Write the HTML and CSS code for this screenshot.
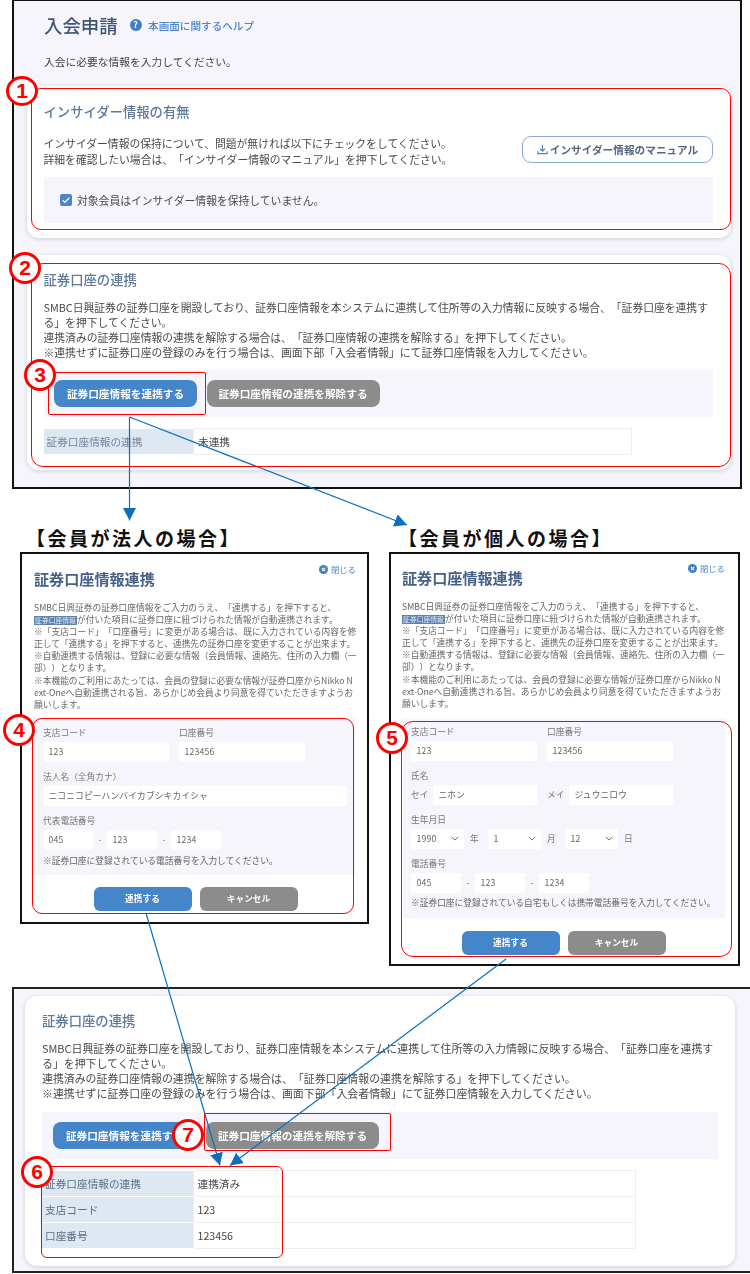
FILE: index.html
```html
<!DOCTYPE html>
<html lang="ja">
<head>
<meta charset="utf-8">
<title>入会申請</title>
<link rel="stylesheet" href="styles.css">
</head>
<body>
<div class="canvas">

  <section class="window win-top">
    <header class="page-head">
      <h1 class="page-title">入会申請</h1>
      <span class="help-icon">?</span>
      <a class="help-link">本画面に関するヘルプ</a>
    </header>
    <p class="page-sub">入会に必要な情報を入力してください。</p>

    <div class="card card-insider">
      <h2 class="card-title">インサイダー情報の有無</h2>
      <div class="insider-row">
        <p class="text">インサイダー情報の保持について、問題が無ければ以下にチェックをしてください。<br>詳細を確認したい場合は、「インサイダー情報のマニュアル」を押下してください。</p>
        <button class="btn-outline">
          <svg class="dl-icon" viewBox="0 0 12 12"><path d="M6 1v6.5M3.4 5.2 6 7.8l2.6-2.6M1 8v2.6h10V8"/></svg>
          インサイダー情報のマニュアル
        </button>
      </div>
      <div class="check-box">
        <span class="check"><svg viewBox="0 0 12 12"><path d="M2.8 6.2 5 8.4l4.2-4.6"/></svg></span>
        <span class="text">対象会員はインサイダー情報を保持していません。</span>
      </div>
    </div>

    <div class="card card-link">
      <h2 class="card-title">証券口座の連携</h2>
      <p class="text link-text">SMBC日興証券の証券口座を開設しており、証券口座情報を本システムに連携して住所等の入力情報に反映する場合、「証券口座を連携する」を押下してください。<br>連携済みの証券口座情報の連携を解除する場合は、「証券口座情報の連携を解除する」を押下してください。<br>※連携せずに証券口座の登録のみを行う場合は、画面下部「入会者情報」にて証券口座情報を入力してください。</p>
      <div class="btn-band">
        <button class="btn btn-blue">証券口座情報を連携する</button>
        <button class="btn btn-gray">証券口座情報の連携を解除する</button>
      </div>
      <table class="info">
        <tr><th>証券口座情報の連携</th><td>未連携</td></tr>
      </table>
    </div>
  </section>

  <div class="case-label case-corp">【会員が法人の場合】</div>
  <div class="case-label case-person">【会員が個人の場合】</div>

  <section class="window modal modal-corp">
    <header class="modal-head">
      <h2 class="modal-title">証券口座情報連携</h2>
      <span class="close"><svg viewBox="0 0 10 10"><circle cx="5" cy="5" r="5"/><path d="M3.2 3.2l3.6 3.6M6.8 3.2 3.2 6.8"/></svg>閉じる</span>
    </header>
    <p class="modal-text">SMBC日興証券の証券口座情報をご入力のうえ、「連携する」を押下すると、<br><span class="tag">証券口座情報</span>が付いた項目に証券口座に紐づけられた情報が自動連携されます。<br>※「支店コード」「口座番号」に変更がある場合は、既に入力されている内容を修正して「連携する」を押下すると、連携先の証券口座を変更することが出来ます。<br>※自動連携する情報は、登録に必要な情報（会員情報、連絡先、住所の入力欄（一部））となります。<br>※本機能のご利用にあたっては、会員の登録に必要な情報が証券口座からNikko Next-Oneへ自動連携される旨、あらかじめ会員より同意を得ていただきますようお願いします。</p>
    <div class="form">
      <div class="grid-two">
        <div><div class="label">支店コード</div><div class="field w-126">123</div></div>
        <div><div class="label">口座番号</div><div class="field w-126">123456</div></div>
      </div>
      <div class="group">
        <div class="label">法人名（全角カナ）</div>
        <div class="field w-304">ニコニコピーハンバイカブシキカイシャ</div>
      </div>
      <div class="group">
        <div class="label">代表電話番号</div>
        <div class="tel"><div class="field w-50">045</div><span>-</span><div class="field w-50">123</div><span>-</span><div class="field w-50">1234</div></div>
      </div>
      <p class="note">※証券口座に登録されている電話番号を入力してください。</p>
    </div>
    <div class="modal-btns">
      <button class="mbtn btn-blue">連携する</button>
      <button class="mbtn btn-gray">キャンセル</button>
    </div>
  </section>

  <section class="window modal modal-person">
    <header class="modal-head">
      <h2 class="modal-title">証券口座情報連携</h2>
      <span class="close"><svg viewBox="0 0 10 10"><circle cx="5" cy="5" r="5"/><path d="M3.2 3.2l3.6 3.6M6.8 3.2 3.2 6.8"/></svg>閉じる</span>
    </header>
    <p class="modal-text">SMBC日興証券の証券口座情報をご入力のうえ、「連携する」を押下すると、<br><span class="tag">証券口座情報</span>が付いた項目に証券口座に紐づけられた情報が自動連携されます。<br>※「支店コード」「口座番号」に変更がある場合は、既に入力されている内容を修正して「連携する」を押下すると、連携先の証券口座を変更することが出来ます。<br>※自動連携する情報は、登録に必要な情報（会員情報、連絡先、住所の入力欄（一部））となります。<br>※本機能のご利用にあたっては、会員の登録に必要な情報が証券口座からNikko Next-Oneへ自動連携される旨、あらかじめ会員より同意を得ていただきますようお願いします。</p>
    <div class="form">
      <div class="grid-two">
        <div><div class="label">支店コード</div><div class="field w-126">123</div></div>
        <div><div class="label">口座番号</div><div class="field w-126">123456</div></div>
      </div>
      <div class="group">
        <div class="label">氏名</div>
        <div class="grid-two">
          <div class="name"><span>セイ</span><div class="field w-104">ニホン</div></div>
          <div class="name"><span>メイ</span><div class="field w-104">ジュウニロウ</div></div>
        </div>
      </div>
      <div class="group">
        <div class="label">生年月日</div>
        <div class="birth">
          <div class="field select">1990<svg viewBox="0 0 10 6"><path d="M1 1l4 4 4-4"/></svg></div><span>年</span>
          <div class="field select">1<svg viewBox="0 0 10 6"><path d="M1 1l4 4 4-4"/></svg></div><span>月</span>
          <div class="field select">12<svg viewBox="0 0 10 6"><path d="M1 1l4 4 4-4"/></svg></div><span>日</span>
        </div>
      </div>
      <div class="group">
        <div class="label">電話番号</div>
        <div class="tel"><div class="field w-50">045</div><span>-</span><div class="field w-50">123</div><span>-</span><div class="field w-50">1234</div></div>
      </div>
      <p class="note note-person">※証券口座に登録されている自宅もしくは携帯電話番号を入力してください。</p>
    </div>
    <div class="modal-btns">
      <button class="mbtn btn-blue">連携する</button>
      <button class="mbtn btn-gray">キャンセル</button>
    </div>
  </section>

  <section class="window win-bottom">
    <div class="card card-result">
      <h2 class="card-title">証券口座の連携</h2>
      <p class="text result-text">SMBC日興証券の証券口座を開設しており、証券口座情報を本システムに連携して住所等の入力情報に反映する場合、「証券口座を連携する」を押下してください。<br>連携済みの証券口座情報の連携を解除する場合は、「証券口座情報の連携を解除する」を押下してください。<br>※連携せずに証券口座の登録のみを行う場合は、画面下部「入会者情報」にて証券口座情報を入力してください。</p>
      <div class="btn-band band-result">
        <button class="btn btn-blue">証券口座情報を連携する</button>
        <button class="btn btn-gray">証券口座情報の連携を解除する</button>
      </div>
      <table class="info info-result">
        <tr><th>証券口座情報の連携</th><td>連携済み</td></tr>
        <tr><th>支店コード</th><td>123</td></tr>
        <tr><th>口座番号</th><td>123456</td></tr>
      </table>
    </div>
  </section>

  <svg class="arrows" viewBox="0 0 750 1274">
    <defs>
      <marker id="head" markerUnits="userSpaceOnUse" markerWidth="14" markerHeight="14" refX="12.5" refY="6.5" orient="auto">
        <path d="M0 0 12.5 6.5 0 13z" fill="#0a70bd"/>
      </marker>
    </defs>
    <path class="arrow" d="M129.5 417V520.5" marker-end="url(#head)"/>
    <path class="arrow" d="M129.5 417 407 525" marker-end="url(#head)"/>
    <path class="arrow" d="M146 913 220 1165.5" marker-end="url(#head)"/>
    <path class="arrow" d="M506 959 230 1165.5" marker-end="url(#head)"/>
  </svg>

  <div class="mark m1"></div>
  <div class="mark m2"></div>
  <div class="mark m3"></div>
  <div class="mark m4"></div>
  <div class="mark m5"></div>
  <div class="mark m6"></div>
  <div class="mark m7"></div>

  <div class="badge b1">1</div>
  <div class="badge b2">2</div>
  <div class="badge b3">3</div>
  <div class="badge b4">4</div>
  <div class="badge b5">5</div>
  <div class="badge b6">6</div>
  <div class="badge b7">7</div>
</div>
</body>
</html>
```

FILE: styles.css
```css
* { box-sizing: border-box; }
html, body { margin: 0; padding: 0; background: #fff; }
body { font-family: "Noto Sans CJK JP", "Noto Sans", sans-serif; color: #444; text-spacing-trim: space-all; }
h1, h2, p { margin: 0; font-weight: 500; }
button { font-family: inherit; border: 0; padding: 0; text-spacing-trim: space-all; }

.canvas { position: relative; width: 750px; height: 1274px; overflow: hidden; background: #fff; }

/* free-standing screenshot windows on the canvas */
.window { position: absolute; border: 2px solid #111; }
.win-top { left: 12px; top: -1px; width: 730px; height: 490px; padding: 0 13px; background: #f5f5fb; filter: blur(.25px); }
.win-bottom { left: 12px; top: 987px; width: 740px; height: 286px; padding: 7px 0 0 11px; background: #f5f5fb; border-color: #222; filter: blur(.25px); }
.modal { background: #fff; filter: blur(.35px); }
.modal-corp { left: 20px; top: 552px; width: 349px; height: 372px; padding: 10px 10px 0 12px; }
.modal-person { left: 389px; top: 552px; width: 351px; height: 414px; padding: 9px 13px 0 11px; }

/* page head */
.page-head { display: flex; align-items: center; height: 48px; padding-left: 17px; }
.page-title { font-size: 18.4px; line-height: 24px; color: #3d5475; }
.help-icon { width: 12px; height: 12px; margin-left: 12px; border-radius: 50%; background: #3f7fc4; color: #fff; font-size: 9px; font-weight: 700; line-height: 12px; text-align: center; }
.help-link { margin-left: 6.5px; font-size: 10.6px; font-weight: 500; color: #4a86c8; }
.page-sub { margin-top: 5px; padding-left: 17px; font-size: 10.75px; line-height: 16px; font-weight: 400; }

/* cards */
.card { background: #fff; border-radius: 12px; box-shadow: 0 1px 4px rgba(90, 100, 130, .28); padding: 16px 18px 0 16.5px; }
.card-insider { margin-top: 16px; height: 152px; width: 704px; }
.card-link { margin-top: 17px; height: 215px; width: 704px; padding-top: 15px; }
.card-result { width: 710px; height: 270px; padding: 15px 17px 0; }
.card-title { font-size: 13.33px; line-height: 20px; color: #5f7a99; }
.text { font-size: 10.8px; line-height: 16px; color: #4a4a4a; font-weight: 400; }

.insider-row { display: flex; justify-content: space-between; align-items: flex-start; margin-top: 13px; }
.btn-outline { display: flex; align-items: center; justify-content: center; gap: 2px; width: 191px; height: 27px; margin-top: 1px; background: #fff; border: 1px solid #86aedb; border-radius: 9px; font-size: 10.67px; font-weight: 700; color: #55667f; }
.dl-icon { width: 11px; height: 11px; fill: none; stroke: #4a86c8; stroke-width: 1.3; }
.check-box { display: flex; align-items: center; gap: 5px; height: 46px; margin-top: 10px; padding-left: 16.5px; background: #f5f5fb; }
.check { display: block; width: 12px; height: 12px; border-radius: 2px; background: #4a86c8; }
.check svg { display: block; fill: none; stroke: #fff; stroke-width: 1.3; }

.link-text { margin-top: 10px; line-height: 15px; word-break: break-all; }
.result-text { margin-top: 10px; line-height: 15px; font-size: 10.92px; word-break: break-all; }
.btn-band { display: flex; gap: 9.5px; height: 47px; margin-top: 10px; padding: 10px 10.5px; background: #f5f5fb; }
.band-result { margin-top: 11px; padding-left: 10.5px; }
.btn { height: 27px; border-radius: 8px; font-size: 10.67px; font-weight: 700; color: #fff; }
.btn-band .btn-blue { width: 143px; }
.btn-band .btn-gray { width: 173px; }
.band-result .btn-blue { width: 144px; }
.btn-blue { background: #4585c9; }
.btn-gray { background: #8c8c8c; }

.info { margin-top: 11px; width: 588px; border-collapse: collapse; font-size: 10.67px; }
.info-result { width: 594px; }
.info th { width: 150px; height: 26px; padding: 0 3px; background: #dde8f3; border-bottom: 1px solid #fff; color: #74859a; font-weight: 400; text-align: left; }
.info td { height: 26px; padding: 0 4px; background: #fff; border: 1px solid #eeeef2; color: #444; }
.info-result th { width: 151px; color: #5f6f82; }

/* labels above the dialogs */
.case-label { position: absolute; top: 526px; font-size: 19px; line-height: 24px; font-weight: 700; letter-spacing: 2.5px; color: #111; white-space: nowrap; }
.case-corp { left: 26px; }
.case-person { left: 398px; }

/* dialogs */
.modal-head { display: flex; justify-content: space-between; align-items: flex-start; }
.modal-title { margin-top: 4px; font-size: 15.1px; line-height: 20px; font-weight: 700; color: #46608a; }
.close { display: flex; align-items: center; gap: 3px; font-size: 8.4px; line-height: 10px; color: #4a86c8; }
.modal-corp .close { margin-right: 1px; }
.close svg { width: 9px; height: 9px; }
.close circle { fill: #3f7fc4; }
.close path { fill: none; stroke: #fff; stroke-width: 1.2; }
.modal-text { margin-top: 14px; font-size: 8.72px; line-height: 12.1px; color: #666; font-weight: 400; word-break: break-all; }
.tag { display: inline-block; width: 43px; height: 8.5px; background: #5c82ad; color: #dfe8f2; font-size: 6.8px; line-height: 8.5px; text-align: center; }

.form { width: 322px; margin-top: 7px; margin-left: -1px; padding: 9px 10px 8px; background: #f5f5fb; }
.modal-person .form { margin-top: 9px; margin-left: 1px; padding: 7px 8px 9px; }
.grid-two { display: grid; grid-template-columns: 126px 126px; gap: 10px; }
.group { margin-top: 9px; }
.label { margin-bottom: 3px; font-size: 8.72px; line-height: 12px; color: #777; }
.field { height: 20px; padding-left: 5.5px; background: #fff; border-radius: 2px; font-size: 8.72px; line-height: 20px; color: #666; letter-spacing: .15px; }
.w-126 { width: 126px; }
.w-304 { width: 304px; }
.w-104 { width: 104px; }
.w-50 { width: 50px; }
.tel { display: flex; align-items: center; }
.tel span { width: 14px; font-size: 8.72px; color: #777; text-align: center; }
.name { display: flex; align-items: center; justify-content: space-between; font-size: 8.72px; color: #777; }
.birth { display: flex; align-items: center; font-size: 8.72px; color: #777; }
.birth span { width: 24px; padding-left: 6px; }
.birth .select { display: flex; align-items: center; justify-content: space-between; flex: none; width: 53px; padding-right: 5px; }
.select svg { width: 8px; height: 5px; fill: none; stroke: #666; stroke-width: 1.2; }
.note { margin-top: 5px; font-size: 8.72px; line-height: 12px; color: #666; font-weight: 400; }
.note-person { margin-top: 4px; }
.modal-btns { display: flex; justify-content: center; gap: 8px; margin-top: 12px; }
.modal-person .modal-btns { margin-top: 13px; }
.mbtn { width: 98px; height: 24px; border-radius: 6px; font-size: 8.72px; font-weight: 700; color: #fff; }

/* annotations drawn over the screenshots */
.arrows { position: absolute; left: 0; top: 0; width: 750px; height: 1274px; pointer-events: none; }
.arrow { fill: none; stroke: #0a70bd; stroke-width: 1.2; }

.mark { position: absolute; border: 1.5px solid #f00; }
.m1 { left: 31px; top: 88px; width: 700px; height: 142px; border-radius: 10px; }
.m2 { left: 31px; top: 263px; width: 700px; height: 204px; border-radius: 12px; }
.m3 { left: 48px; top: 372px; width: 158px; height: 43px; border-radius: 2px; }
.m4 { left: 32px; top: 718px; width: 322px; height: 196px; border-radius: 10px; }
.m5 { left: 401px; top: 721px; width: 331px; height: 236px; border-radius: 12px; }
.m6 { left: 41px; top: 1166px; width: 242px; height: 92px; border-radius: 6px; }
.m7 { left: 204px; top: 1113px; width: 187px; height: 38px; border-radius: 2px; }

.badge { position: absolute; width: 32px; height: 32px; background: #fff; border: 3px solid #f00; border-radius: 50%; color: #f00; font-family: "Liberation Sans", Arial, sans-serif; font-size: 21px; font-weight: 700; line-height: 26px; text-align: center; }
.b1 { left: 6px; top: 76px; height: 30px; line-height: 24px; }
.b2 { left: 9px; top: 252px; }
.b3 { left: 24px; top: 359px; }
.b4 { left: 3px; top: 714px; }
.b5 { left: 376px; top: 722px; }
.b6 { left: 21px; top: 1156px; }
.b7 { left: 172px; top: 1119px; }
```
